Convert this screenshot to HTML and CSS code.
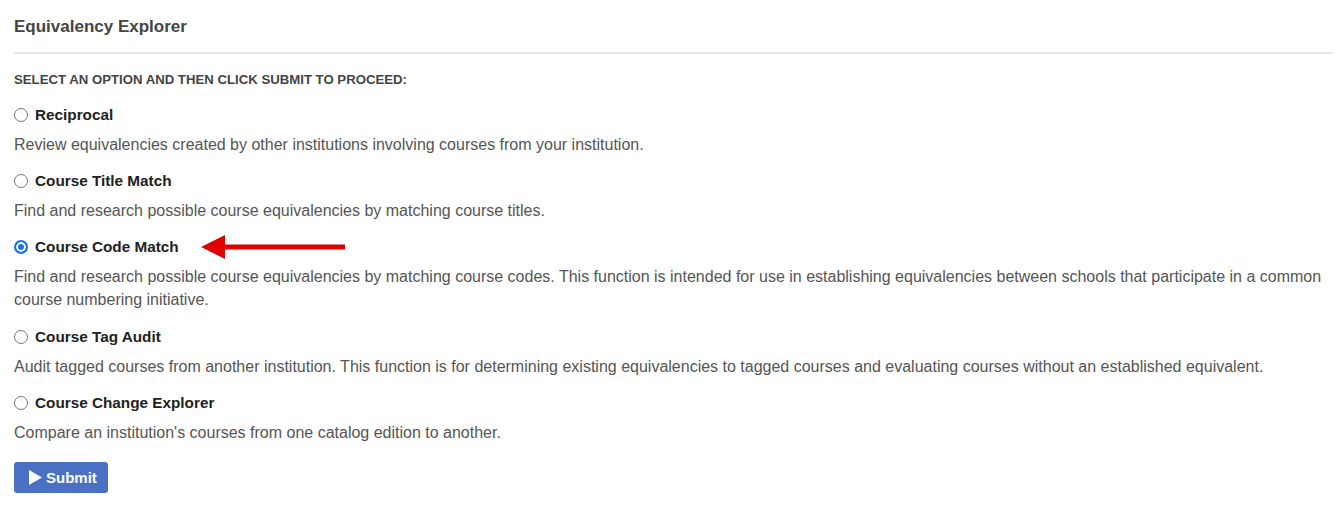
FILE: index.html
```html
<!DOCTYPE html>
<html lang="en">
<head>
    <meta charset="UTF-8">
    <title>Equivalency Explorer</title>
    <link rel="stylesheet" href="styles.css">
</head>
<body>
    <div class="panel">
        <h2 class="panel-title">Equivalency Explorer</h2>
        <form class="options">
            <p class="prompt">Select an option and then click submit to proceed:</p>

            <div class="option">
                <label class="option-label"><input type="radio" name="mode"> Reciprocal</label>
                <p class="option-desc">Review equivalencies created by other institutions involving courses from your institution.</p>
            </div>
            <div class="option">
                <label class="option-label"><input type="radio" name="mode"> Course Title Match</label>
                <p class="option-desc">Find and research possible course equivalencies by matching course titles.</p>
            </div>
            <div class="option">
                <div class="label-row">
                    <label class="option-label"><input type="radio" name="mode" checked> Course Code Match</label>
                    <!-- callout arrow -->
                    <svg class="callout" width="146" height="24" viewBox="0 0 146 24">
                        <polygon points="0,12 24,0 24,9.5 144,9.5 144,14.5 24,14.5 24,24" fill="#e00000"/>
                    </svg>
                </div>
                <p class="option-desc">Find and research possible course equivalencies by matching course codes. This function is intended for use in establishing equivalencies between schools that participate in a common course numbering initiative.</p>
            </div>
            <div class="option">
                <label class="option-label"><input type="radio" name="mode"> Course Tag Audit</label>
                <p class="option-desc">Audit tagged courses from another institution. This function is for determining existing equivalencies to tagged courses and evaluating courses without an established equivalent.</p>
            </div>
            <div class="option">
                <label class="option-label"><input type="radio" name="mode"> Course Change Explorer</label>
                <p class="option-desc">Compare an institution's courses from one catalog edition to another.</p>
            </div>

            <button type="button" class="button">
                <svg width="13" height="15" viewBox="0 0 13 15"><polygon points="0,0 13,7.5 0,15" fill="#fff"/></svg>
                Submit
            </button>
        </form>
    </div>
</body>
</html>
```

FILE: styles.css
```css
/* Page */
body {
    margin: 0;
    font-family: "Liberation Sans", Arial, sans-serif;
    color: #555;
    background: #fff;
}
.panel {
    padding: 17px 8px 0 14px;
}
.panel-title {
    margin: 0;
    padding-bottom: 15px;
    border-bottom: 2px solid #e6e6e6;
    font-size: 17px;
    font-weight: bold;
    color: #444;
}
.prompt {
    margin: 18px 0 19px;
    font-size: 13.2px;
    font-weight: bold;
    text-transform: uppercase;
    color: #444;
}

/* Radio options */
.option {
    margin-bottom: 16px;
}
.option:nth-of-type(3) {
    margin-bottom: 17px;
}
.label-row {
    display: flex;
    align-items: center;
    gap: 22px;
    height: 18px;
}
.option-label {
    display: flex;
    align-items: center;
    gap: 7px;
    font-size: 15.3px;
    font-weight: bold;
    color: #222;
}
.option-label input {
    appearance: none;
    margin: 0;
    width: 14px;
    height: 14px;
    border: 1px solid #777;
    border-radius: 50%;
    background: #fff;
}
.option-label input:checked {
    border: 2px solid #1a73e8;
    background: #1a73e8;
    box-shadow: inset 0 0 0 2px #fff;
}
.option-desc {
    margin: 9px 0 0;
    font-size: 16px;
    line-height: 23px;
}
.callout {
    display: block;
}

.button {
    display: flex;
    align-items: center;
    gap: 4px;
    height: 31px;
    padding: 0 11px 0 15px;
    margin-top: 18px;
    border: 0;
    border-radius: 3px;
    background: #4a70c4;
    color: #fff;
    font-family: inherit;
    font-size: 15px;
    font-weight: bold;
}
```
